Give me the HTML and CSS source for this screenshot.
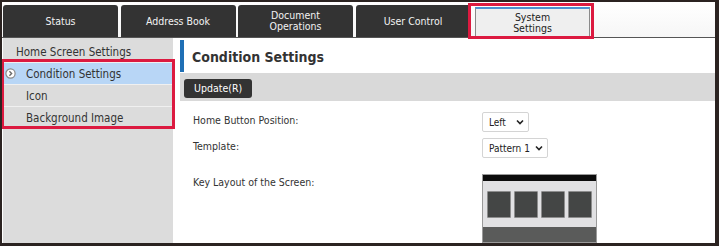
FILE: index.html
```html
<!DOCTYPE html>
<html>
<head>
<meta charset="utf-8">
<link rel="stylesheet" href="styles.css">
</head>
<body>
<div class="frame">
  <div class="tabbar">
    <div class="tab">Status</div>
    <div class="tab">Address Book</div>
    <div class="tab">Document<br>Operations</div>
    <div class="tab">User Control</div>
    <div class="tab active">System<br>Settings</div>
    <div class="hl hl-tab"></div>
  </div>
  <div class="body">
    <div class="sidebar">
      <div class="side-item top">Home Screen Settings</div>
      <div class="side-group">
        <div class="side-item sub selected">
          <svg class="arrow" width="11" height="11" viewBox="0 0 11 11"><circle cx="5.5" cy="5.5" r="4.6" fill="#fff" stroke="#8a8a8a" stroke-width="1.2"/><path d="M4.4 3.3 L6.6 5.5 L4.4 7.7" fill="none" stroke="#6a6a6a" stroke-width="1.4"/></svg>
          Condition Settings
        </div>
        <div class="side-item sub">Icon</div>
        <div class="side-item sub">Background Image</div>
        <div class="hl hl-side"></div>
      </div>
    </div>
    <div class="main">
      <div class="title">Condition Settings</div>
      <div class="toolbar"><button class="btn">Update(R)</button></div>
      <div class="form">
        <div class="label">Home Button Position:</div>
        <div class="ctl"><div class="sel sel-left">Left <svg width="8" height="6" viewBox="0 0 8 6"><path d="M1 1.5 L4 4.5 L7 1.5" fill="none" stroke="#222" stroke-width="1.6"/></svg></div></div>
        <div class="label">Template:</div>
        <div class="ctl"><div class="sel sel-pat">Pattern 1 <svg width="8" height="6" viewBox="0 0 8 6"><path d="M1 1.5 L4 4.5 L7 1.5" fill="none" stroke="#222" stroke-width="1.6"/></svg></div></div>
        <div class="label lay">Key Layout of the Screen:</div>
        <div class="ctl lay">
          <div class="preview">
            <div class="pv-top"></div>
            <div class="pv-keys"><span></span><span></span><span></span><span></span></div>
            <div class="pv-bottom"></div>
          </div>
        </div>
      </div>
    </div>
  </div>
</div>
</body>
</html>
```

FILE: styles.css
```css
html, body { margin: 0; padding: 0; background: #fff; }
body { font-family: "DejaVu Sans Condensed", "DejaVu Sans", sans-serif; color: #333; }

.frame {
  box-sizing: border-box;
  width: 719px;
  height: 246px;
  border-style: solid;
  border-color: #2b2321;
  border-width: 2px 4px 3px 2px;
  display: flex;
  flex-direction: column;
  overflow: hidden;
}

.tabbar {
  position: relative;
  height: 36px;
  padding: 3px 0 0 1px;
  box-sizing: border-box;
  display: flex;
  gap: 2.5px;
  border-bottom: 1px solid #555;
  background: linear-gradient(#fff, #f6f6f6);
  flex: none;
}
.tab {
  width: 115px;
  height: 32px;
  background: #333;
  color: #f2f2f2;
  border-radius: 3px 3px 0 0;
  font-size: 10.5px;
  line-height: 11px;
  display: flex;
  align-items: center;
  justify-content: center;
  text-align: center;
}
.tab.active {
  margin-left: 2px;
  margin-top: 2px;
  height: 30px;
  box-sizing: border-box;
  background: #efefef;
  color: #222;
  border: 1px solid #8a8a8a;
  border-top: 2px solid #4d8fd0;
  border-bottom: none;
  border-radius: 0;
}

.hl { position: absolute; border: 3px solid #dc1a40; box-sizing: border-box; pointer-events: none; }
.hl-tab { left: 466px; top: 1px; width: 126px; height: 36px; }

.body { flex: 1; display: flex; min-height: 0; }

.sidebar {
  width: 170px;
  margin-left: 1px;
  background: #dcdcdc;
  padding-top: 3px;
  flex: none;
  font-size: 11.5px;
  color: #333;
}
.side-group { position: relative; }
.hl-side { left: -2px; top: -4px; width: 174px; height: 70px; }
.side-item {
  height: 21px;
  line-height: 22px;
  border-bottom: 1px solid #f0f0f0;
  padding-left: 13px;
  position: relative;
}
.side-item.sub { padding-left: 23px; }
.side-item.sub:last-of-type { border-bottom: none; }
.side-item.selected { background: #b8d6f6; }
.arrow { position: absolute; left: 2px; top: 5px; }

.main { flex: 1; margin-left: 7px; }
.title {
  margin-top: 2px;
  height: 32px;
  border-left: 4px solid #1f6fb5;
  padding-left: 8px;
  font-weight: bold;
  font-size: 14px;
  line-height: 35px;
  color: #333;
  box-sizing: border-box;
}
.toolbar {
  margin-top: 1px;
  height: 28px;
  background: #d9d9d9;
  padding: 4px 0 0 4px;
  box-sizing: border-box;
}
.btn {
  height: 19px;
  padding: 0 10px;
  background: #333;
  color: #fff;
  border: none;
  border-radius: 3px;
  font-family: inherit;
  font-size: 10.5px;
  line-height: 19px;
}

.form {
  display: grid;
  grid-template-columns: 289px auto;
  padding: 11px 0 0 13px;
  row-gap: 6px;
  font-size: 10.5px;
  color: #333;
}
.label { padding-top: 2px; height: 20px; box-sizing: border-box; line-height: 12px; }
.ctl { display: flex; }
.sel {
  height: 20px;
  box-sizing: border-box;
  border: 1px solid #d4d4d4;
  border-radius: 2px;
  padding: 0 4px 0 6px;
  display: flex;
  align-items: center;
  justify-content: space-between;
  color: #222;
  font-size: 10px;
  background: #fff;
}
.sel-left { width: 47px; }
.sel-pat { width: 66px; }
.label.lay { margin-top: 10px; padding-top: 2px; }
.ctl.lay { margin-top: 10px; }

.preview {
  width: 115px;
  height: 69px;
  background: #e1e1e3;
  border: 1px solid #9a9a9a;
  box-sizing: border-box;
  display: flex;
  flex-direction: column;
}
.pv-top { height: 6px; background: #0c0c0c; }
.pv-keys {
  display: flex;
  gap: 3px;
  padding: 10px 4px 0 4px;
  height: 36px;
  box-sizing: border-box;
}
.pv-keys span {
  flex: 1;
  height: 25px;
  background: #444645;
  border: 1px solid #8d8d8d;
  border-radius: 1px;
}
.pv-bottom { margin-top: 10px; flex: 1; background: #5a5b5a; }
```
